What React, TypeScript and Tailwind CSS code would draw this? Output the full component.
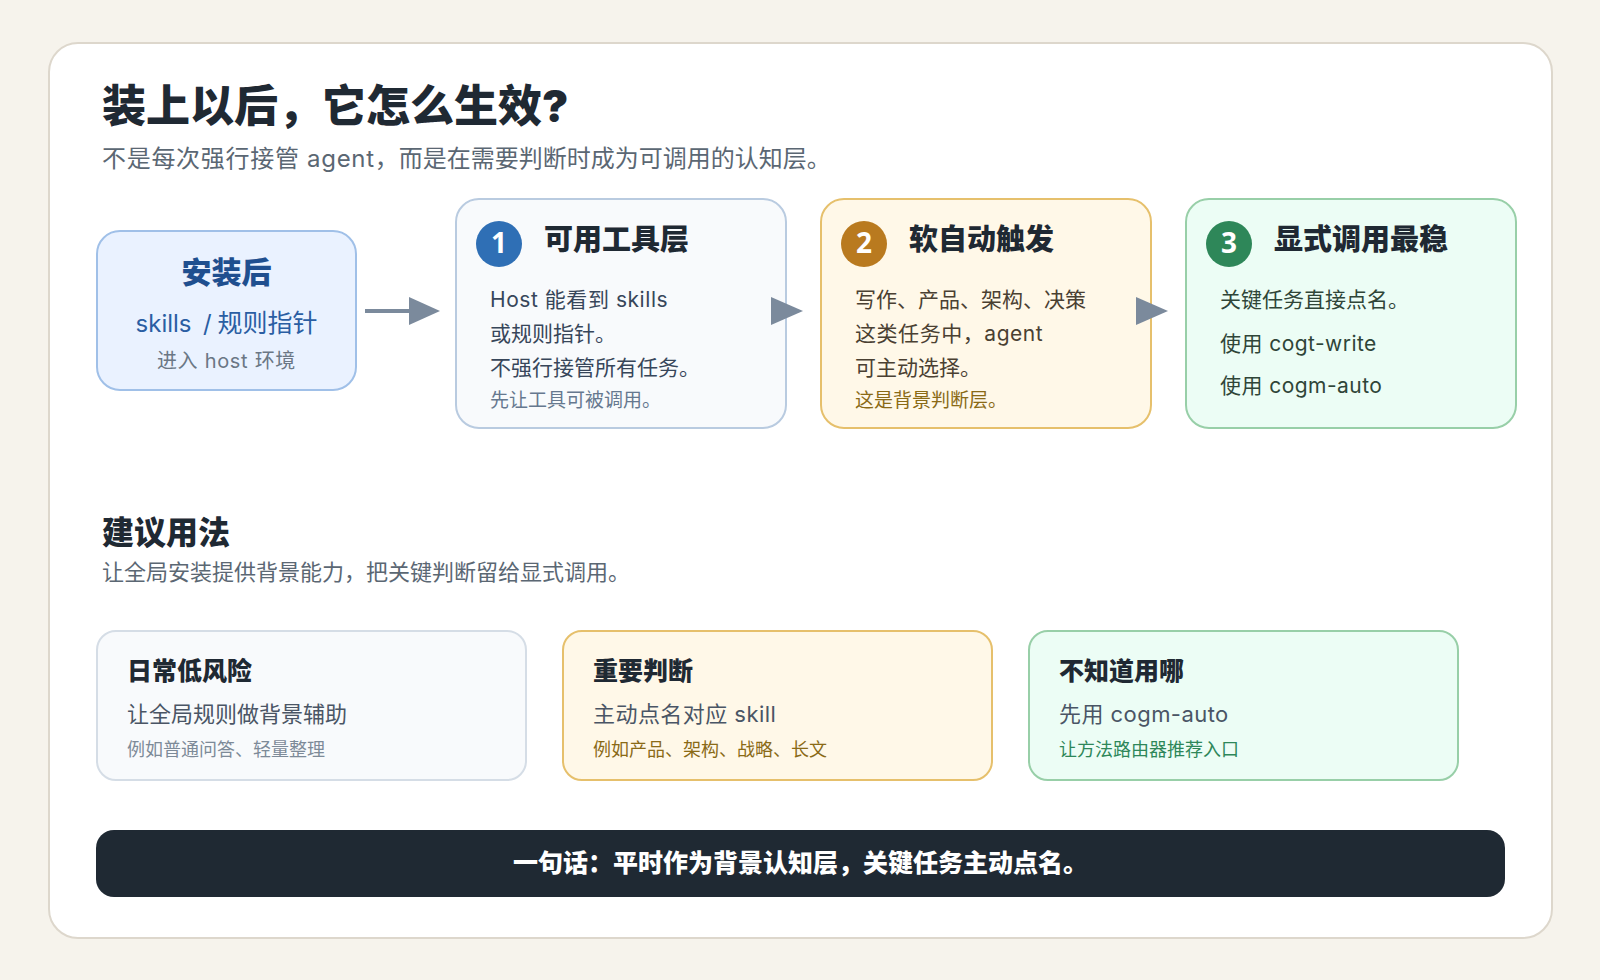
import React from 'react';

const font = { fontFamily: '"Inter", "Noto Sans CJK SC", sans-serif' };

type Step = {
  num: string;
  title: string;
  box: string;
  badge: string;
  text: string;
  lines: { t: string; wide?: boolean }[];
  note?: string;
  noteColor?: string;
};

const steps: Step[] = [
  {
    num: '1',
    title: '可用工具层',
    box: 'bg-[#f8fafc] border-[#b9cbe0]',
    badge: 'bg-[#2f6fb5]',
    text: 'text-[#37465a]',
    lines: [{ t: 'Host 能看到 skills', wide: true }, { t: '或规则指针。' }, { t: '不强行接管所有任务。' }],
    note: '先让工具可被调用。',
    noteColor: 'text-[#66788f]',
  },
  {
    num: '2',
    title: '软自动触发',
    box: 'bg-[#fff8e8] border-[#e6c06c]',
    badge: 'bg-[#b97a1f]',
    text: 'text-[#4a4032]',
    lines: [{ t: '写作、产品、架构、决策' }, { t: '这类任务中\uFF0Cagent', wide: true }, { t: '可主动选择。' }],
    note: '这是背景判断层。',
    noteColor: 'text-[#8a6a16]',
  },
];

const tips = [
  {
    title: '日常低风险',
    main: '让全局规则做背景辅助',
    note: '例如普通问答、轻量整理',
    box: 'bg-[#f8fafc] border-[#d5dde6]',
    noteColor: 'text-[#7d8a98]',
    mainClass: '',
  },
  {
    title: '重要判断',
    main: '主动点名对应 skill',
    note: '例如产品、架构、战略、长文',
    box: 'bg-[#fff8e8] border-[#e6c06c]',
    noteColor: 'text-[#8a6a16]',
    mainClass: 'tracking-[0.45px]',
  },
  {
    title: '不知道用哪',
    main: '先用 cogm-auto',
    note: '让方法路由器推荐入口',
    box: 'bg-[#ecfdf5] border-[#98cfa8]',
    noteColor: 'text-[#2e8759]',
    mainClass: 'tracking-[0.45px]',
  },
];

function Arrow({ withLine }: { withLine?: boolean }) {
  if (withLine) {
    return (
      <svg width="75" height="28" viewBox="0 0 75 28" className="shrink-0 mt-[99px] ml-[8px] mr-[15px]">
        <line x1="0" y1="14" x2="46" y2="14" stroke="#7b8a9c" strokeWidth="4" />
        <polygon points="44,0 75,14 44,28" fill="#7b8a9c" />
      </svg>
    );
  }
  return (
    <svg width="32" height="28" viewBox="0 0 32 28" className="shrink-0 relative z-10 mt-[99px] ml-[-16px] mr-[17px]">
      <polygon points="0,0 32,14 0,28" fill="#7b8a9c" />
    </svg>
  );
}

function StepHeader({ num, title, badge }: { num: string; title: string; badge: string }) {
  return (
    <div className="flex items-start pl-[19px] pt-[21px]">
      <div className={`w-[46px] h-[46px] rounded-full flex items-center justify-center text-white text-[28px] leading-[42px] pb-[4px] box-border font-bold ${badge}`} style={{ fontFamily: '"Noto Sans", sans-serif' }}>
        {num}
      </div>
      <div className="ml-[22px] mt-[-4px] h-[46px] leading-[46px] text-[29px] font-black text-[#1f2933]">{title}</div>
    </div>
  );
}

function StepCard({ step }: { step: Step }) {
  return (
    <div className={`w-[332px] h-[231px] shrink-0 box-border rounded-[24px] border-2 ${step.box}`}>
      <StepHeader num={step.num} title={step.title} badge={step.badge} />
      <div className="pl-[33px] pt-[16px]">
        {step.lines.map((l) => (
          <div key={l.t} className={`text-[21px] leading-[34px] ${step.text} ${l.wide ? 'tracking-[0.55px]' : ''}`}>{l.t}</div>
        ))}
        <div className={`mt-[1px] text-[19px] leading-[30px] ${step.noteColor}`}>{step.note}</div>
      </div>
    </div>
  );
}

export default function App() {
  return (
    <div className="w-[1600px] h-[980px] bg-[#f6f3ec] pt-[42px] pl-[48px] box-border overflow-hidden" style={font}>
      <div className="w-[1505px] h-[897px] box-border bg-white border-2 border-[#ddd7cc] rounded-[30px] px-[46px] pt-[32px]">
        <div className="pl-[6px] text-[44px] leading-[60px] font-black text-[#1f2933]">装上以后{'\uFF0C'}它怎么生效?</div>
        <div className="pl-[6px] mt-[5px] text-[24px] leading-[36px] text-[#5b6773]">
          <span className="tracking-[0.7px]">不是每次强行接管 agent</span>{'\uFF0C'}而是在需要判断时成为可调用的认知层。
        </div>

        <div className="flex items-start mt-[21px] h-[231px]">
          <div className="w-[261px] h-[161px] mt-[32px] shrink-0 box-border rounded-[24px] border-2 bg-[#eaf2ff] border-[#a0c0e8] flex flex-col items-center">
            <div className="mt-[18px] text-[30px] leading-[44px] font-black text-[#1f4f8f]">安装后</div>
            <div className="mt-[11px] text-[24px] leading-[36px] text-[#2a5ea3] whitespace-pre [word-spacing:-1px]">skills  / <span className="text-[25px]">规则指针</span></div>
            <div className="mt-[4px] text-[20px] leading-[30px] tracking-[0.7px] text-[#6b7785]">进入 host 环境</div>
          </div>
          <Arrow withLine />
          <StepCard step={steps[0]} />
          <Arrow />
          <StepCard step={steps[1]} />
          <Arrow />
          <div className="w-[332px] h-[231px] shrink-0 box-border rounded-[24px] border-2 bg-[#ecfdf5] border-[#98cfa8]">
            <StepHeader num="3" title="显式调用最稳" badge="bg-[#2e8759]" />
            <div className="pl-[33px] pt-[16px] text-[21px] text-[#2f4538]">
              <div className="leading-[34px]">关键任务直接点名。</div>
              <div className="leading-[34px] mt-[10px] tracking-[0.45px]">使用 cogt-write</div>
              <div className="leading-[34px] mt-[8px] tracking-[0.45px]">使用 cogm-auto</div>
            </div>
          </div>
        </div>

        <div className="pl-[6px] mt-[82px] text-[32px] leading-[44px] font-black text-[#1f2933]">建议用法</div>
        <div className="pl-[6px] text-[22px] leading-[34px] text-[#5b6773]">
          让全局安装提供背景能力{'\uFF0C'}把关键判断留给显式调用。
        </div>

        <div className="flex gap-[35px] mt-[41px]">
          {tips.map((t) => (
            <div key={t.title} className={`w-[431px] h-[151px] box-border rounded-[20px] border-2 pl-[29px] pt-[20px] ${t.box}`}>
              <div className="text-[25px] leading-[38px] font-black text-[#1f2933]">{t.title}</div>
              <div className={`mt-[7px] text-[22px] leading-[34px] text-[#4a5565] ${t.mainClass}`}>{t.main}</div>
              <div className={`mt-[4px] text-[18px] leading-[30px] ${t.noteColor}`}>{t.note}</div>
            </div>
          ))}
        </div>

        <div className="mt-[49px] h-[67px] w-[1409px] rounded-[18px] bg-[#1f2933] flex items-center justify-center text-white text-[25px] font-black">
          一句话{'\uFF1A'}平时作为背景认知层{'\uFF0C'}关键任务主动点名。
        </div>
      </div>
    </div>
  );
}
